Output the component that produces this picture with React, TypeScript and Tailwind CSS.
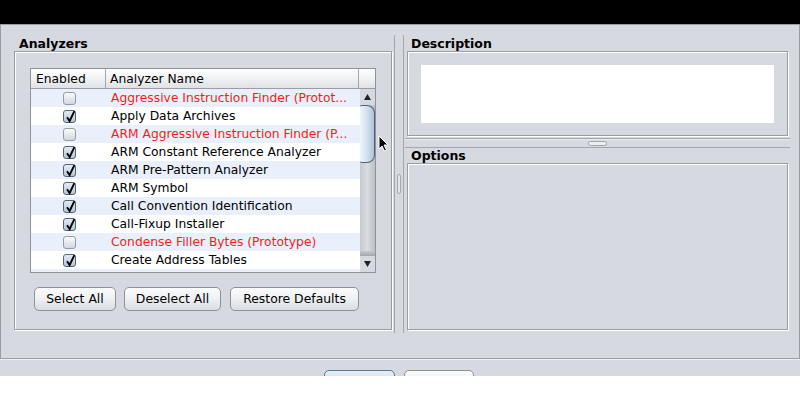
import React from "react";

type Row = { name: string; on: boolean; proto?: boolean };

const rows: Row[] = [
  { name: "Aggressive Instruction Finder (Protot...", on: false, proto: true },
  { name: "Apply Data Archives", on: true },
  { name: "ARM Aggressive Instruction Finder (P...", on: false, proto: true },
  { name: "ARM Constant Reference Analyzer", on: true },
  { name: "ARM Pre-Pattern Analyzer", on: true },
  { name: "ARM Symbol", on: true },
  { name: "Call Convention Identification", on: true },
  { name: "Call-Fixup Installer", on: true },
  { name: "Condense Filler Bytes (Prototype)", on: false, proto: true },
  { name: "Create Address Tables", on: true },
  // only the top of this row's checkbox shows
  { name: "", on: true },
];

// etched (lowered) border like Swing's EtchedBorder
const etched =
  "border border-[#9a9da3] shadow-[inset_1px_1px_0_#ffffff,1px_1px_0_#ffffff]";

function Check({ on }: { on: boolean }) {
  return (
    <div
      className={`relative w-[13px] h-[13px] rounded-[3px] border ${
        on
          ? "border-[#52647c] bg-linear-to-b from-[#e4ebf4] to-[#b7c6d8]"
          : "border-[#949aa3] bg-linear-to-b from-[#fcfcfd] to-[#d3d6dc]"
      }`}
    >
      {on && (
        <svg
          className="absolute left-[1px] top-[-1px]"
          width="11"
          height="13"
          viewBox="0 0 11 13"
        >
          <path
            d="M2 7.2 L4.6 11 L9.4 1.2"
            stroke="#000"
            strokeWidth="1.9"
            fill="none"
            strokeLinejoin="miter"
          />
        </svg>
      )}
    </div>
  );
}

function Btn({ label, w }: { label: string; w: string }) {
  return (
    <div
      className={`${w} h-[24px] rounded-[5px] border border-[#8e9198] bg-linear-to-b from-[#fbfbfc] via-[#eef0f2] to-[#d9dce1] flex items-center justify-center text-[12.4px]`}
    >
      {label}
    </div>
  );
}

function AnalyzerTable() {
  return (
    <div className="w-[346px] h-[205px] border border-[#8f9296] bg-white flex flex-col">
      {/* header */}
      <div className="h-[20px] flex border-b border-[#9a9da3] bg-linear-to-b from-[#fdfdfd] via-[#f1f2f4] to-[#dfe1e5] text-[12.3px]">
        <div className="w-[75px] border-r border-[#a4a7ad] pl-[5px] pt-[1px] flex items-center">
          Enabled
        </div>
        <div className="w-[253px] border-r border-[#a4a7ad] pl-[4px] pt-[1px] flex items-center">
          Analyzer Name
        </div>
        <div className="flex-1" />
      </div>
      <div className="flex h-[183px]">
        <div className="w-[329px] overflow-hidden">
          {rows.map((r, i) => (
            <div
              key={i}
              className={`h-[18px] flex items-center ${
                i % 2 === 0 ? "bg-[#e9f0fb]" : "bg-white"
              }`}
            >
              <div className="w-[76px] flex justify-center pl-[1px]">
                <Check on={r.on} />
              </div>
              <div
                className={`pl-[4px] pt-[1px] whitespace-nowrap text-[12.3px] ${
                  r.proto ? "text-[#f51c1c]" : "text-black"
                }`}
              >
                {r.name}
              </div>
            </div>
          ))}
        </div>
        {/* scrollbar */}
        <div className="w-[15px] flex flex-col bg-linear-to-r from-[#c6c9cf] via-[#d9dce0] to-[#bcc0c6]">
          <div className="h-[16px] flex items-center justify-center bg-[#d6d9df]">
            <svg width="9" height="8" viewBox="0 0 9 8">
              <path d="M4.5 1 L8 7 L1 7 Z" fill="#222" />
            </svg>
          </div>
          <div className="h-[58px] rounded-r-[8px] rounded-l-[2px] border border-l-0 border-[#4d6179] bg-linear-to-r from-[#f0f5fa] via-[#d3e1ee] to-[#aec3d9]" />
          <div className="flex-1" />
          <div className="h-[5px] bg-linear-to-b from-[#c3c7cc] to-[#a2a7ae]" />
          <div className="h-[16px] flex items-center justify-center bg-[#d6d9df]">
            <svg width="9" height="8" viewBox="0 0 9 8">
              <path d="M1 1 L8 1 L4.5 7 Z" fill="#222" />
            </svg>
          </div>
        </div>
      </div>
    </div>
  );
}

export default function App() {
  return (
    <div className="w-[800px] h-[400px] bg-white overflow-hidden relative font-['DejaVu_Sans',sans-serif] text-black">
      <div className="h-[24px] bg-black" />
      <div className="h-[335px] bg-[#d6d9df] border border-[#9a9da3] flex">
        {/* Analyzers */}
        <div className="w-[392px] pl-[13px] pt-[11px] flex flex-col">
          <div className="h-[15px] pl-[5px] text-[12.5px] font-bold leading-[15px]">
            Analyzers
          </div>
          <div className={`w-[378px] h-[279px] ${etched} pl-[15px] pt-[16px]`}>
            <AnalyzerTable />
            <div className="flex mt-[14px] ml-[4px]">
              <Btn label="Select All" w="w-[82px]" />
              <div className="w-[8px]" />
              <Btn label="Deselect All" w="w-[97px]" />
              <div className="w-[9px]" />
              <Btn label="Restore Defaults" w="w-[129px]" />
            </div>
          </div>
        </div>

        {/* vertical split divider */}
        <div className="w-[11px] pt-[10px] flex">
          <div className="ml-[1px] w-[1px] h-[298px] bg-[#a3a6ac]" />
          <div className="ml-[2px] w-[4px] flex flex-col justify-center h-[298px]">
            <div className="h-[20px] w-[4px] rounded-[2px] border border-[#a3a6ac] bg-[#e4e6ea]" />
          </div>
          <div className="ml-[2px] w-[1px] h-[298px] bg-[#a3a6ac]" />
        </div>

        {/* Description / Options */}
        <div className="flex-1 pt-[11px] flex flex-col">
          <div className="h-[15px] pl-[7px] text-[12.5px] font-bold leading-[15px]">
            Description
          </div>
          <div className={`ml-[3px] w-[381px] h-[85px] ${etched} pl-[13px] pt-[13px]`}>
            <div className="w-[353px] h-[58px] bg-white" />
          </div>
          <div className="ml-[1px] w-[385px] h-[12px] relative">
            <div className="absolute left-0 right-0 top-[2px] h-[1px] bg-[#a3a6ac]" />
            <div className="absolute left-0 right-0 top-[3px] h-[1px] bg-[#e8eaed]" />
            <div className="absolute left-[183px] top-[5px] w-[19px] h-[5px] rounded-[3px] border border-[#a3a6ac] bg-[#eceef1]" />
            <div className="absolute left-0 right-0 top-[11px] h-[1px] bg-[#a3a6ac]" />
          </div>
          <div className="h-[15px] pl-[7px] text-[12.5px] font-bold leading-[15px]">
            Options
          </div>
          <div className={`ml-[3px] w-[381px] h-[167px] ${etched}`} />
        </div>
      </div>

      {/* bottom button strip, cut off */}
      <div className="h-[17px] bg-[#d6d9df] border-t border-[#eef0f2] overflow-hidden flex pt-[10px]">
        <div className="ml-[324px] w-[71px] h-[24px] rounded-[5px] border border-[#5e7592] bg-linear-to-b from-[#e6eef6] to-[#c3d2e2]" />
        <div className="ml-[9px] w-[70px] h-[24px] rounded-[5px] border border-[#8e9198] bg-linear-to-b from-[#fbfbfc] to-[#e2e4e8]" />
      </div>

      {/* mouse pointer */}
      <svg
        className="absolute left-[378px] top-[135px]"
        width="12"
        height="18"
        viewBox="0 0 12 18"
      >
        <path
          d="M1 1 L1 14 L4 11 L6.5 16 L8.5 15 L6 10 L10 10 Z"
          fill="#000"
          stroke="#fff"
          strokeWidth="1"
        />
      </svg>
    </div>
  );
}
